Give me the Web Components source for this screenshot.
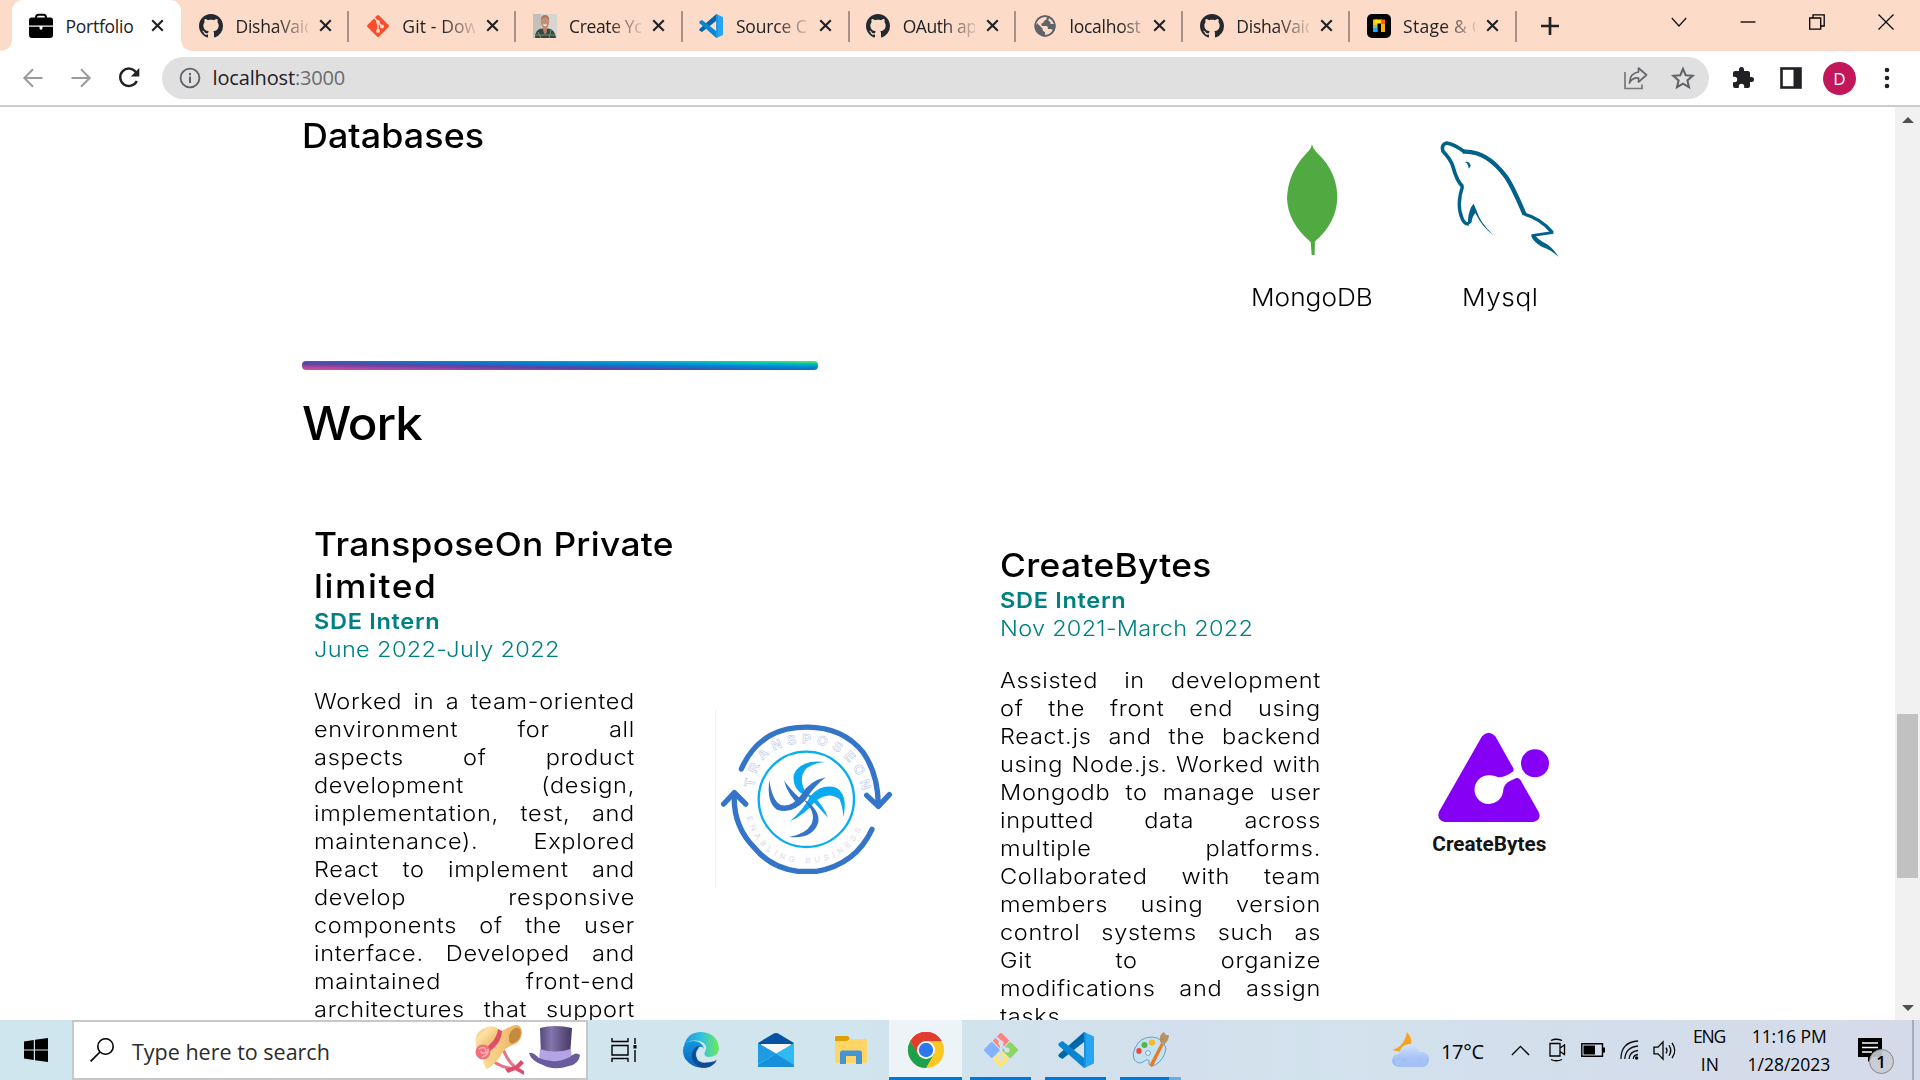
<!DOCTYPE html>
<html lang="en">
<head>
<meta charset="utf-8">
<title>Portfolio</title>
<style>
html,body{margin:0;height:100%;overflow:hidden;background:#fff}
body{font-family:"Open Sans","Noto Sans",sans-serif;color:#202124}
</style>
</head>
<body>
<desktop-screen></desktop-screen>
<script>
const ICONS = {
  briefcase: ['0 0 24 24', '<path d="M7 6V3.500Q7 .7 9.500 .7H14.500Q17 .7 17 3.500V6" fill="none" stroke="#000" stroke-width="2"/><path d="M2.500 3.500H21.500Q24 3.500 24 6.500V11.500H0V6.500Q0 3.500 2.500 3.500Z"/><path d="M0 12.800H10.500V14.500Q12 17 13.500 14.500V12.800H24V21Q24 24 21 24H3Q0 24 0 21Z"/>'],
  github: ['0 0 16 16', '<path fill="#24292f" d="M8 0C3.580 0 0 3.580 0 8c0 3.540 2.290 6.530 5.470 7.590.4.070.55-.17.55-.38 0-.19-.01-.82-.01-1.490-2.010.37-2.530-.49-2.690-.94-.09-.23-.48-.94-.82-1.130-.28-.15-.68-.52-.01-.53.63-.01 1.080.58 1.230.82.72 1.210 1.870.87 2.330.66.07-.52.28-.87.51-1.070-1.780-.2-3.640-.89-3.640-3.950 0-.87.31-1.590.82-2.150-.08-.2-.36-1.020.08-2.120 0 0 .67-.21 2.200.82.64-.18 1.320-.27 2-.27s1.360.09 2 .27c1.530-1.040 2.200-.82 2.200-.82.44 1.100.16 1.920.08 2.120.51.56.82 1.270.82 2.150 0 3.070-1.870 3.750-3.650 3.950.29.25.54.73.54 1.480 0 1.070-.01 1.930-.01 2.200 0 .21.15.46.55.38A8.010 8.010 0 0 0 16 8c0-4.420-3.580-8-8-8Z"/>'],
  git: ['0 0 24 24', '<rect x="3.800" y="3.800" width="16.400" height="16.400" rx="1.500" fill="#fc4c2b" transform="rotate(45 12 12)"/><path d="M8 3.500L12 7.500V17M12 8.500L16 12.500" stroke="#fddbc9" stroke-width="1.500" fill="none"/><g fill="#fddbc9"><circle cx="12" cy="8" r="1.900"/><circle cx="12" cy="17" r="1.900"/><circle cx="16" cy="12.500" r="1.900"/></g>'],
  photo: ['0 0 24 24', '<rect width="24" height="24" fill="#d8d4d0"/><rect width="8" height="24" fill="#c5bfba"/><path d="M2 24Q2 15 9 14.500H15Q22 15 23 24Z" fill="#33483f"/><path d="M5 18L8 24M18 16L16 24M3 21H22" stroke="#7a8f85" stroke-width="1"/><path d="M9.500 12H14.500L13.500 19L12 20.500L10.500 18Z" fill="#b9826b"/><ellipse cx="12" cy="8" rx="4.200" ry="6.200" fill="#c08d76"/><path d="M7.800 6Q8 1 12 1T16.200 6Q14 3.200 12 3.200T7.800 6" fill="#a87863"/><path d="M9.800 10.500Q12 13.500 14.200 10.500" fill="#fff"/>'],
  vscode: ['0 0 36 36', '<path d="M26 0L36 4.500V31.500L26 36Z" fill="#27a4f2"/><path d="M26 0V10L4.500 27L1 25Q-.5 23.500 1 22Z" fill="#0067ad"/><path d="M26 36V26L4.500 9L1 11Q-.5 12.500 1 14Z" fill="#0a86d1"/><path d="M26 0L28 1V35L26 36Z" fill="#1b90dc"/>'],
  globe: ['0 0 24 24', '<circle cx="12" cy="12" r="10.500" fill="#5f6368"/><path d="M14 2.500Q14 6 11 7Q11 9 8.500 9.500V12H14Q15 13 15 15H17.500Q19.500 15 20.500 17Q17 22 12 21V18Q9.500 17.500 9.500 14.500L4 9Q2 13 3.500 15.500Q5 20 10 21.200V23Q1 21 1.200 12Q3 2 14 2.500ZM16 4Q14.500 7.500 17.500 8V10H21.500Q20 5.500 16 4" fill="#fddbc9"/><circle cx="12" cy="12" r="9.800" fill="none" stroke="#5f6368" stroke-width="1.700"/>'],
  stage: ['0 0 24 24', '<rect width="24" height="24" rx="5" fill="#000"/><path d="M6 5.500H10.500V18H6Z" fill="#ffc400"/><path d="M6 11H10V14H6Z" fill="#59d6b0"/><path d="M6 14H10V18H6Z" fill="#28a7ee"/><path d="M8 5.500H15V9.500H8Z" fill="#ffe000"/><path d="M14 5.500H18V11H14Z" fill="#ff5a1f"/><path d="M14 10H18V18H14Z" fill="#ffb000"/>'],
  close: ['0 0 14 14', '<path d="M1.300 1.300L12.700 12.700M12.700 1.300L1.300 12.700" stroke="#202124" stroke-width="2.300"/>'],
  plus: ['0 0 18 18', '<path d="M9 0V18M0 9H18" stroke="#202124" stroke-width="2.700"/>'],
  wchev: ['0 0 16 16', '<path d="M.8 4L8 12L15.200 4" fill="none" stroke="#111" stroke-width="1.200"/>'],
  wmin: ['0 0 16 16', '<path d="M.5 8H15.500" stroke="#000" stroke-width="1.300"/>'],
  wmax: ['0 0 16 16', '<path d="M.7 4H11.700V15.200H.7ZM4 4V.8H15.200V12H12" fill="none" stroke="#000" stroke-width="1.300"/>'],
  wclose: ['0 0 16 16', '<path d="M.5 .5L15.500 15.500M15.500 .5L.5 15.500" stroke="#000" stroke-width="1.200"/>'],
  back: ['0 0 20 20', '<path d="M19.500 10H1.500M10 1.200L1.300 10L10 18.800" fill="none" stroke="#9a9b9d" stroke-width="2"/>'],
  fwd: ['0 0 20 20', '<path d="M.5 10H18.500M10 1.200L18.700 10L10 18.800" fill="none" stroke="#9a9b9d" stroke-width="2"/>'],
  reload: ['0 0 22 22', '<path d="M18.800 14A8.700 8.700 0 1 1 18 5.200" fill="none" stroke="#202124" stroke-width="2.400"/><path d="M21.300 1V9.500H12.800Z" fill="#202124"/>'],
  info: ['0 0 22 22', '<circle cx="11" cy="11" r="9.400" fill="none" stroke="#5f6368" stroke-width="1.900"/><path d="M11 9.600V16M11 6V8.200" stroke="#5f6368" stroke-width="2"/>'],
  share: ['0 0 24 24', '<path d="M1 6V22.500H18V18.500" fill="none" stroke="#76777a" stroke-width="1.700"/><path d="M14.500 2L22.500 9L14.500 16V12Q8 11.500 5.500 17Q6 7 14.500 6Z" fill="none" stroke="#66676a" stroke-width="1.700" stroke-linejoin="round"/>'],
  star: ['0 0 24 24', '<path d="M12 2.800L14.700 9.200L21.700 9.800L16.400 14.400L18 21.200L12 17.600L6 21.200L7.600 14.400L2.300 9.800L9.300 9.200Z" fill="none" stroke="#5f6368" stroke-width="2"/>'],
  puzzle: ['0 0 24 24', '<path fill="#202124" d="M20.500 11H19V7c0-1.100-.9-2-2-2h-4V3.500a2.500 2.500 0 0 0-5 0V5H4c-1.100 0-2 .9-2 2v3.800h1.500a2.700 2.700 0 0 1 0 5.400H2V20c0 1.100.9 2 2 2h3.800v-1.500a2.700 2.700 0 0 1 5.400 0V22H17c1.100 0 2-.9 2-2v-4h1.500a2.500 2.500 0 0 0 0-5Z"/>'],
  panel: ['0 0 22 22', '<rect x="1.500" y="1.500" width="19" height="19" fill="none" stroke="#202124" stroke-width="2.600"/><path d="M13.500 1H21V21H13.500Z" fill="#202124"/>'],
  dots: ['0 0 6 22', '<g fill="#202124"><circle cx="3" cy="3" r="2.300"/><circle cx="3" cy="11" r="2.300"/><circle cx="3" cy="19" r="2.300"/></g>'],
  mongo: ['112 84 360 360', '<path d="M247 103Q251 119 266 132Q323 188 323 264Q320 340 256 394L255 435H246L243 396Q174 338 172 264Q175 188 229 131Q244 119 247 103Z" fill="#50aa41" transform="translate(45 0)"/>'],
  dolphin: ['630 84 360 360', '<g fill="none" stroke="#00618a" stroke-linejoin="round"><path d="M970 367L905 377" stroke-width="8"/><path d="M882 312Q930 324 967 367" stroke-width="10"/><path d="M698 125Q770 120 829 202Q848 230 884 314" stroke-width="13"/><path d="M704 126Q672 102 650 99Q632 104 639 124Q662 148 669 170Q680 212 698 230" stroke-width="11"/><path d="M698 228Q678 286 697 327Q704 343 716 342" stroke-width="10"/></g><g fill="#00618a"><path d="M731 281L739 300Q752 341 790 375Q756 351 736 309Q726 320 725 337Q717 347 706 344Q716 338 714 329Q717 295 731 281Z"/><path d="M903 377L914 374Q923 388 950 402Q970 415 986 441Q965 420 935 410Q911 396 903 377Z"/><path d="M704 156Q720 152 722 169L716 176Q715 166 711 160Z"/></g>'],
  transpose: ['0 0 660 600', `<path d="M47 28V566" stroke="#eceffd" stroke-width="3"/>
    <g fill="none" stroke="#3474c9" stroke-width="16"><path d="M124 207Q174 94 290 83Q420 70 490 158Q533 220 535 312" stroke-linecap="round"/><path d="M500 286L535 319L568 284" stroke-linecap="round" stroke-linejoin="round"/><path d="M103 282Q98 378 164 444Q212 503 294 514H350Q467 493 516 388" stroke-linecap="round"/><path d="M71 312L103 278L137 312" stroke-linecap="round" stroke-linejoin="round"/></g>
    <circle cx="319" cy="298" r="143" fill="none" stroke="#06aef2" stroke-width="7"/>
    <g fill="#0baaf0"><path d="M375 186Q300 178 281 224Q277 260 303 280L320 283Q295 240 313 213Q330 190 375 186Z"/><path d="M270 364Q315 343 345 305Q385 272 418 297Q428 318 430 351Q445 285 409 263Q365 250 331 288Q310 330 270 364Z"/><path d="M314 280L329 293L384 353Q370 316 340 289Z"/></g>
    <g fill="#3474c9"><path d="M208 240Q199 308 231 329Q274 345 317 299Q341 260 377 232Q329 243 306 281Q277 323 242 315Q216 301 208 240Z"/><path d="M309 298Q351 338 334 373Q318 402 268 411Q340 418 355 366Q360 332 318 302Z"/><path d="M252 242Q265 288 298 314L312 304Q285 285 252 242Z"/></g>
    <defs><path id="arcTop" d="M161 262Q172 132 319 130Q455 134 490 280"/><path id="arcBottom" d="M140 352Q180 487 319 489Q458 487 496 352"/></defs>
    <text font-family="Liberation Sans" font-weight="700" font-size="40" fill="#fff" stroke="#b0c2e5" stroke-width="1.500"><textPath href="#arcTop" textLength="470">TRANSPOSEON</textPath></text>
    <text font-family="Liberation Sans" font-size="23" fill="#fff" stroke="#ccd" stroke-width=".8"><textPath href="#arcBottom" textLength="450">ENABLING BUSINESS</textPath></text>`],
  createbytes: ['0 0 540 510', `<path d="M246 109Q266 87 286 109L340 205Q343 213 336 217Q315 232 295 232Q280 225 266 226A43 43 0 1 0 309 276Q309 252 331 242L349 234Q357 233 361 239L416 336Q426 360 400 366H134Q109 360 117 335Z" fill="#8500f5"/><circle cx="405" cy="190" r="42" fill="#8500f5"/><text x="97" y="454" font-family="Roboto" font-weight="700" font-size="58" fill="#151515" textLength="342" lengthAdjust="spacingAndGlyphs">CreateBytes</text>`],
  windows: ['0 0 24 24', '<path d="M0 3.400L9.800 2V11.400H0ZM11 1.800L24 0V11.400H11ZM0 12.600H9.800V22L0 20.600ZM11 12.600H24V24L11 22.200Z"/>'],
  search: ['0 0 24 24', '<circle cx="15.500" cy="8.500" r="7.700" fill="none" stroke="#000" stroke-width="1.600"/><path d="M10 14L.6 23.400" stroke="#000" stroke-width="1.700"/>'],
  hats: ['0 0 106 50', `<defs><linearGradient id="straw" x2="1" y2="1"><stop stop-color="#e9b765"/><stop offset=".3" stop-color="#ffe2a2"/><stop offset="1" stop-color="#e0a04c"/></linearGradient><linearGradient id="brim" x2="1"><stop stop-color="#ffdf9d"/><stop offset="1" stop-color="#e9ad58"/></linearGradient><linearGradient id="felt"><stop stop-color="#55497d"/><stop offset=".35" stop-color="#8276ad"/><stop offset="1" stop-color="#453862"/></linearGradient></defs>
    <path d="M13 30Q20 42 40 44M28 24Q33 37 41 43" fill="none" stroke="#e87488" stroke-width="3"/>
    <path d="M24 7C30 5 36 0 42 0C49 2 48 13 42 18C36 21 31 22 28 27C24 34 18 41 12 44C8 41 9 34 6 30Z" fill="url(#brim)"/>
    <path d="M34 15C33 8 38 2 43 3C48 5 46 15 39 18C36 19 34 18 34 15Z" fill="#c58a40"/>
    <path d="M1 21C-1 12 3 5 10 3C15 0 22 1 25 6C26 10 22 18 14 24C8 28 3 28 1 21Z" fill="url(#straw)"/>
    <path d="M9 24C17 19 22 12 23 4L27 6C27 14 21 23 12 28Z" fill="#df5068"/>
    <circle cx="8" cy="27" r="7.500" fill="#f16f7b"/><path d="M4 24Q11 20 11 27Q6 30 6 26M7 32Q14 30 13 24" fill="none" stroke="#ffadb1" stroke-width="1.500"/><path d="M40 41L46 35L49 38L44 43L49 46V50L40 45L33 48L30 44Z" fill="#df4d6a"/>
    <path d="M65 3Q80 -1 97 3L95 31H66Z" fill="url(#felt)"/><path d="M65 24Q80 29 96 24L97 35Q80 41 64 35Z" fill="#b4a3e5"/><path d="M54 28Q58 27 64 33Q80 40 95 32Q101 26 105 30Q104 39 94 41Q79 46 68 40Q56 36 54 28Z" fill="#6a5b9d"/>`],
  taskview: ['0 0 26 24', '<path d="M1 0V3.500H17V0M1 24V20.500H17V24M1 7.500H17V17H1ZM24 0V6M24 12V24" fill="none" stroke="#000" stroke-width="1.400"/><rect x="22.500" y="7" width="3" height="3.500"/>'],
  edge: ['0 0 36 36', `<defs><linearGradient id="eg"><stop stop-color="#2293dc"/><stop offset=".5" stop-color="#31c3dd"/><stop offset="1" stop-color="#6dea5a"/></linearGradient><linearGradient id="eb" x2="0" y2="1"><stop stop-color="#1496de"/><stop offset="1" stop-color="#0763bd"/></linearGradient></defs><path d="M1 14Q4 0 18 0Q35 1 36 17Q35 25 25 25Q20 24 22 20Q26 12 16 9Q6 7 1 14Z" fill="url(#eg)"/><path d="M0 19Q0 9 10 9Q19 9 21 17Q13 15 13 23Q14 34 25 34.500Q15 38 6 31Q0 26 0 19Z" fill="url(#eb)"/><path d="M17 14Q10 20 14 27Q19 34 32 28Q35 27 32 31Q24 39 15 34Q5 26 11 17Q13 14 17 14Z" fill="#114b94"/><path d="M16 15Q21 14 21 18Q18 22 21 25Q24 28 32 26Q35 26 32 29Q23 32 18 28Q12 22 16 15Z" fill="#d4e6ef"/>`],
  mail: ['0 0 36 34', '<path d="M0 10L15 1Q18-1 21 1L36 10V20H0Z" fill="#0753a1"/><path d="M3 11H33V25H3Z" fill="#f8f8f8"/><path d="M0 10L36 31V33H0Z" fill="#1e9be2"/><path d="M36 10L0 31V34H36Z" fill="#30baf1"/><path d="M18 21L36 32V34H0V32Z" fill="#188fda"/>'],
  folder: ['0 0 32 28', '<path d="M0 5V1.500Q0 0 1.500 0H12Q14 0 14.500 3H30Q32 3 32 5V25Q32 27 30 27H2Q0 27 0 25Z" fill="#ffd566"/><path d="M0 5V1.500Q0 0 1.500 0H12Q14 0 14.500 3L12 5Z" fill="#dda000"/><path d="M5 28V17Q5 14.500 7.500 14.500H24.500Q27 14.500 27 17V28H21V20H11V28Z" fill="#4395d5"/>'],
  chrome: ['0 0 36 36', '<circle cx="18" cy="18" r="18" fill="#fcc71f"/><path d="M18 18L2.400 9A18 18 0 0 1 33.600 9H18Z" fill="#e33b2e"/><path d="M2.400 9A18 18 0 0 0 18 36L26 22L18 18L10.500 22.500Z" fill="#1da04a"/><path d="M2.400 9L10.200 22.500L18 9H33.600A18 18 0 0 0 2.400 9" fill="#e33b2e"/><circle cx="18" cy="18" r="9" fill="#fff"/><circle cx="18" cy="18" r="7.200" fill="#2a78ec"/>'],
  gitbash: ['0 0 36 36', '<g transform="rotate(45 18 18)"><rect x="5.500" y="5.500" width="12" height="12" rx="1.500" fill="#ff8282"/><rect x="18.500" y="5.500" width="12" height="12" rx="1.500" fill="#8bd565"/><rect x="5.500" y="18.500" width="12" height="12" rx="1.500" fill="#83b2ff"/><rect x="18.500" y="18.500" width="12" height="12" rx="1.500" fill="#ffe477"/></g><path d="M13 5L18 10V29M18 13L24 18" fill="none" stroke="#d4e2eb" stroke-width="2"/><g fill="#d4e2eb"><circle cx="18" cy="11" r="2.600"/><circle cx="18" cy="26" r="2.600"/><circle cx="24" cy="18" r="2.600"/></g>'],
  paint: ['0 0 36 36', '<path d="M2 16Q7 5 19 5Q31 6 33 17Q31 28 22 33Q15 36 16 29Q15 26 10 30Q5 33 1 27Q-1 22 2 16Z" fill="#c3e2f2" stroke="#6d9cb9" stroke-width="1"/><circle cx="15" cy="21" r="2.400" fill="#eaf5fa" stroke="#78a3bb"/><ellipse cx="6" cy="19" rx="2.700" ry="3" fill="#e8493d"/><ellipse cx="11.500" cy="13" rx="3" ry="2.900" fill="#54b848"/><ellipse cx="19" cy="10.500" rx="3.200" ry="2.900" fill="#f6b829"/><path d="M28 11L31 12L20 34Q17 36 17 32Z" fill="#e97922"/><path d="M27 10Q26 2 31 0L33 3L36 3Q35 11 31 12Z" fill="#b99263"/>'],
  weather: ['0 0 37 36', '<defs><linearGradient id="cl" x2="0" y2="1"><stop stop-color="#d5e4fd"/><stop offset="1" stop-color="#88aef0"/></linearGradient></defs><path d="M15 0Q22 8 18 15Q12 22 0 18Q12 15 15 0Z" fill="#f6a323"/><path d="M7 35Q0 34 0 28Q1 22 7 22Q9 12 18 12Q26 13 27 20Q37 19 37 28Q36 35 30 35H7Z" fill="url(#cl)"/><path d="M2 31Q5 25 12 30Q19 22 27 29Q33 23 36 31Q34 35 30 35H7Q3 35 2 31" fill="#a9c6f5" opacity=".7"/>'],
  up: ['0 0 20 12', '<path d="M1 11L10 1.500L19 11" fill="none" stroke="#000" stroke-width="1.500"/>'],
  meet: ['0 0 17 24', '<path d="M1 5.500H11V18H1ZM11 10L15.500 7V16.500L11 13.500M2 2.500Q7 0 13 2.500M2 21.500Q7 24 13 21.500" fill="none" stroke="#000" stroke-width="1.300"/>'],
  battery: ['0 0 24 14', '<path d="M.8 .8H21.500V13.200H.8Z" fill="none" stroke="#000" stroke-width="1.400"/><path d="M2.500 2.500H14V11.500H2.500ZM22 4.500H24V9.500H22Z"/>'],
  wifi: ['0 0 20 20', '<g fill="none" stroke="#111" stroke-width="1.300"><path d="M1 19Q1 2 19 1M5 19Q6 7 19 6M9.500 19Q10 11.500 19 10.500" /><path d="M14 19Q14 15 19 14.500"/></g><circle cx="17.500" cy="18" r="1.700"/>'],
  speaker: ['0 0 23 22', '<path d="M1 7.500H5L10 2V20L5 14.500H1Z" fill="none" stroke="#000" stroke-width="1.300"/><path d="M13 8Q15 11 13 14M16 5.500Q19.500 11 16 16.500M19 3Q24.500 11 19 19" fill="none" stroke="#000" stroke-width="1.300"/>'],
  note: ['0 0 24 24', '<path d="M0 0H24V19H15L10 24V19H0Z"/><path d="M4 5H20M4 9.500H20M4 14H14" stroke="#fff" stroke-width="1.400"/>'],
  arrowUp: ['0 0 12 8', '<path d="M0 7L6 1L12 7Z" fill="#505050"/>'],
  arrowDown: ['0 0 12 8', '<path d="M0 1L6 7L12 1Z" fill="#505050"/>']
};

function define(name, markup) {
  const t = document.createElement('template');
  t.innerHTML = markup;
  customElements.define(name, class extends HTMLElement {
    constructor() { super(); this.attachShadow({mode: 'open'}).append(t.content.cloneNode(true)); }
  });
}

customElements.define('ui-icon', class extends HTMLElement {
  connectedCallback() {
    if (this.shadowRoot) return;
    const [box, art] = ICONS[this.getAttribute('name')];
    const w = this.getAttribute('w') || 24, h = this.getAttribute('h') || w;
    this.attachShadow({mode: 'open'}).innerHTML =
      `<style>:host{display:block;flex:none;width:${w}px;height:${h}px}svg{display:block;overflow:visible}</style>
       <svg width="${w}" height="${h}" viewBox="${box}" preserveAspectRatio="none" aria-hidden="true">${art}</svg>`;
  }
});

/* A single line of text whose tracking is set so that it fills the width in its "w" attribute.
   The inherited --stretch widens the glyphs themselves. */
const fitted = [];
customElements.define('fit-text', class extends HTMLElement {
  connectedCallback() {
    if (this.shadowRoot) return;
    this.attachShadow({mode: 'open'}).innerHTML =
      '<style>:host{display:inline-block;white-space:nowrap;flex:none}span{display:inline-block;transform:scaleX(var(--stretch,1));transform-origin:0 50%}</style><span><slot></slot></span>';
    fitted.push(this);
  }
  fit() {
    const inner = this.shadowRoot.querySelector('span');
    const gaps = this.textContent.length - 1, w = +this.getAttribute('w');
    const s = +getComputedStyle(this).getPropertyValue('--stretch') || 1;
    inner.style.letterSpacing = (w / s - inner.offsetWidth) / gaps + 'px';
    this.style.width = w + 'px';
  }
});

define('browser-tab', `<style>
  :host{display:flex;align-items:center;box-sizing:border-box;width:166.800px;height:51px;padding:0 15.500px 0 16.500px;position:relative;font-size:17.500px;line-height:50px;flex:none}
  :host([active]){width:169px;padding:0 17px;margin-right:1.500px;background:#fff;border-radius:11px 11px 0 0}
  :host([active])::before,:host([active])::after{content:"";position:absolute;bottom:0;width:11px;height:11px}
  :host([active])::before{left:-11px;background:radial-gradient(circle at 0 0,transparent 10.500px,#fff 11px)}
  :host([active])::after{right:-11px;background:radial-gradient(circle at 100% 0,transparent 10.500px,#fff 11px)}
  .t{flex:1;min-width:0;margin:0 11px 0 12.500px;overflow:hidden;-webkit-mask-image:linear-gradient(90deg,#000 55%,#0002 100%)}
  :host([full]) .t{-webkit-mask-image:linear-gradient(90deg,#000 70%,#0004 100%)}
  :host([active]) .t{-webkit-mask-image:none;margin:0 10px 0 12.500px}
  :host([bar]){border-right:2px solid #a99188;border-image:linear-gradient(transparent 12px,#a99188 12px,#a99188 41px,transparent 41px) 1}
  </style><slot name="icon"></slot><div class="t"><slot></slot></div><ui-icon name="close" w="13"></ui-icon>`);

define('tab-strip', `<style>
  :host{display:flex;align-items:center;height:51px;background:#fddbc9;padding-left:12px}
  .plus{margin-left:24px}.win{display:flex;margin-left:auto}.win ui-icon{margin-right:53px;position:relative;top:-4px}.win ui-icon:last-child{margin-right:26px}
  </style><slot></slot><ui-icon class="plus" name="plus" w="18"></ui-icon>
  <div class="win"><ui-icon name="wchev" w="16"></ui-icon><ui-icon name="wmin" w="16"></ui-icon><ui-icon name="wmax" w="16"></ui-icon><ui-icon name="wclose" w="16"></ui-icon></div>`);

define('browser-toolbar', `<style>
  :host{display:flex;align-items:center;box-sizing:border-box;height:56px;padding:0 30px 0 23px;border-bottom:2px solid #ccc;background:#fff}
  .box{display:flex;align-items:center;height:42px;width:1547.500px;box-sizing:border-box;margin-left:22px;border-radius:21px;background:#e0e0e0;padding:0 14px 0 16.500px}
  .url{margin-left:12px;font-size:20px;line-height:40px}.url span{color:#6c6d70}
  .av{width:33px;height:33px;border-radius:50%;background:#c2185b;color:#fff;font-size:17px;line-height:33px;text-align:center;margin-left:21px}
  </style><ui-icon name="back" w="20"></ui-icon><ui-icon name="fwd" w="20" style="margin-left:28px"></ui-icon><ui-icon name="reload" w="22" style="margin-left:27px"></ui-icon>
  <div class="box"><ui-icon name="info" w="22"></ui-icon><div class="url"><fit-text w="133">localhost<span>:3000</span></fit-text></div>
  <ui-icon name="share" w="24" style="margin-left:auto"></ui-icon><ui-icon name="star" w="24" style="margin-left:23px"></ui-icon></div>
  <ui-icon name="puzzle" w="24" style="margin-left:22px"></ui-icon><ui-icon name="panel" w="22" style="margin-left:25px"></ui-icon><div class="av">D</div><ui-icon name="dots" w="6" h="22" style="margin-left:28px"></ui-icon>`);

define('skill-badge', `<style>
  :host{display:flex;flex-direction:column;align-items:center;width:188px;font-size:24.500px;line-height:30px;color:#000;font-weight:350}
  div{margin-top:24px}</style><slot name="icon"></slot><div><slot></slot></div>`);

define('job-card', `<style>
  :host{display:flex;color:#000;font-size:22px;line-height:28px;font-weight:350}
  .text{width:385.500px;flex:none}
  ::slotted(h3){margin:0;font-weight:500;font-size:33px;line-height:42px}
  .role{font-weight:570;color:teal}.date{color:teal}
  .about{margin-top:24px;width:calc(321px / var(--stretch));transform:scaleX(var(--stretch));transform-origin:0 0}
  .about ::slotted(p){margin:0;text-align:justify;text-align-last:justify;letter-spacing:.650px;white-space:nowrap}
  .about ::slotted(p:last-of-type){text-align-last:left}
  </style><div class="text"><slot name="name"></slot><div class="role"><slot name="role"></slot></div><div class="date"><slot name="date"></slot></div><div class="about"><slot></slot></div></div><slot name="logo"></slot>`);

define('scroll-bar', `<style>
  :host{display:flex;flex-direction:column;align-items:center;width:25px;background:#f1f1f1;flex:none;box-sizing:border-box;padding:9px 0 8px}
  .thumb{width:21px;height:164px;background:#c1c1c1;margin-top:590px;margin-bottom:auto}
  </style><ui-icon name="arrowUp" w="12" h="8"></ui-icon><div class="thumb"></div><ui-icon name="arrowDown" w="12" h="8"></ui-icon>`);

define('portfolio-page', `<style>
  :host{display:block;flex:1;min-width:0;height:913px;overflow:hidden;box-sizing:border-box;padding:8px 0 0 302px;background:#fff;font-family:Inter,"Liberation Sans",sans-serif;color:#000;--stretch:1.070}
  .db{display:flex;height:246px}
  h2,h1{margin:0;font-weight:500}h2{font-size:33.500px;line-height:42px;width:916px}
  skill-badge{padding-top:23px}
  .rule{height:9px;width:516px;border-radius:4px;background:linear-gradient(to right top,#d64fa0 0%,#b84a9f 12%,#6040a0 36%,#4055b5 45%,#1272ca 54%,#0085cf 64%,#00a5d8 76%,#00cf9a 86%,#60dc60 95%)}
  h1{font-size:46px;line-height:56px;margin-top:25px}
  .jobs{display:flex;align-items:flex-start;margin:72px 0 0 12px}
  .b{margin-left:80.500px;padding-top:21px}
  </style>
  <section class="db"><h2><fit-text w="182.500">Databases</fit-text></h2>
    <skill-badge><ui-icon slot="icon" name="mongo" w="120"></ui-icon><fit-text w="122">MongoDB</fit-text></skill-badge>
    <skill-badge><ui-icon slot="icon" name="dolphin" w="120"></ui-icon><fit-text w="76">Mysql</fit-text></skill-badge></section>
  <div class="rule"></div>
  <h1><fit-text w="121">Work</fit-text></h1>
  <section class="jobs">
    <job-card><h3 slot="name"><fit-text w="360">TransposeOn Private</fit-text><br><fit-text w="122">limited</fit-text></h3>
      <fit-text slot="role" w="126">SDE Intern</fit-text><fit-text slot="date" w="246">June 2022-July 2022</fit-text>
      <p>Worked in a team-oriented</p><p>environment for all</p><p>aspects of product</p><p>development (design,</p><p>implementation, test, and</p><p>maintenance). Explored</p><p>React to implement and</p><p>develop responsive</p><p>components of the user</p><p>interface. Developed and</p><p>maintained front-end</p><p style="text-align-last:justify">architectures that support</p>
      <ui-icon slot="logo" name="transpose" w="220" h="200" style="margin-top:177px"></ui-icon></job-card>
    <job-card class="b"><h3 slot="name"><fit-text w="211">CreateBytes</fit-text></h3>
      <fit-text slot="role" w="126">SDE Intern</fit-text><fit-text slot="date" w="253">Nov 2021-March 2022</fit-text>
      <p>Assisted in development</p><p>of the front end using</p><p>React.js and the backend</p><p>using Node.js. Worked with</p><p>Mongodb to manage user</p><p>inputted data across</p><p>multiple platforms.</p><p>Collaborated with team</p><p>members using version</p><p>control systems such as</p><p>Git to organize</p><p>modifications and assign</p><p>tasks.</p>
      <ui-icon slot="logo" name="createbytes" w="180" h="170" style="margin:156px 0 0 14px"></ui-icon></job-card>
  </section>`);

define('task-button', `<style>
  :host{display:flex;width:75px;height:60px;align-items:center;justify-content:center;position:relative;flex:none}
  :host([open])::after,:host([active])::after{content:"";position:absolute;bottom:0;left:7px;right:7px;height:3px;background:#0078d7}
  :host([active])::before{content:"";position:absolute;inset:0 1px;background:#edf4f8}
  :host([active])::after{left:1px;right:1px}
  :host([multi])::after{background:linear-gradient(90deg,#0078d7 49px,#66aee8 49px)}
  ::slotted(*){position:relative}
  </style><slot></slot>`);

define('task-bar', `<style>
  :host{display:flex;align-items:center;height:60px;background:linear-gradient(90deg,#cfe6ee 0%,#d1e5ee 45%,#d3dfec 62%,#d2e2ed 68%,#d3dfec 78%,#d5dae9 100%);color:#000;font-size:17.500px}
  .search{display:flex;align-items:center;box-sizing:border-box;width:516px;height:60px;border:2px solid #c8c8c8;background:#fff;padding:0 5px 0 16px;margin-left:24px}
  .q{font-size:21.500px;line-height:54px;margin-left:18px;padding-top:3px;color:#2b2b2b}
  .two{display:flex;flex-direction:column;align-items:center;line-height:28px;padding-bottom:1px}
  .n{position:relative;margin-left:27px}
  .n b{position:absolute;left:11px;top:11px;width:23px;height:23px;border:1px solid #888;border-radius:50%;background:#c9cbd3e8;text-align:center;font:600 17px/23px "Open Sans"}
  .end{width:2px;height:60px;background:#a4adbd;margin-left:30px}
  </style>
  <ui-icon name="windows" w="24" style="margin-left:24px"></ui-icon>
  <div class="search"><ui-icon name="search" w="24"></ui-icon><div class="q"><fit-text w="198">Type here to search</fit-text></div><ui-icon name="hats" w="106" h="50" style="margin-left:auto"></ui-icon></div>
  <ui-icon name="taskview" w="26" h="24" style="margin:0 26px 0 23px"></ui-icon>
  <task-button><ui-icon name="edge" w="36"></ui-icon></task-button><task-button><ui-icon name="mail" w="36" h="34"></ui-icon></task-button><task-button><ui-icon name="folder" w="32" h="28"></ui-icon></task-button>
  <task-button active><ui-icon name="chrome" w="36"></ui-icon></task-button><task-button open><ui-icon name="gitbash" w="36"></ui-icon></task-button><task-button open><ui-icon name="vscode" w="36"></ui-icon></task-button><task-button open multi><ui-icon name="paint" w="36"></ui-icon></task-button>
  <ui-icon name="weather" w="37" h="36" style="margin-left:204px"></ui-icon><fit-text w="43" style="font-size:20px;margin-left:12px;line-height:58px;padding-top:4px">17°C</fit-text>
  <ui-icon name="up" w="19" h="11" style="margin-left:27px"></ui-icon><ui-icon name="meet" w="17" h="24" style="margin-left:19px"></ui-icon><ui-icon name="battery" w="24" h="14" style="margin-left:15px"></ui-icon><ui-icon name="wifi" w="19" h="20" style="margin-left:15px"></ui-icon><ui-icon name="speaker" w="23" h="21" style="margin-left:14px"></ui-icon>
  <div class="two" style="margin-left:17px"><fit-text w="33.500">ENG</fit-text><fit-text w="18">IN</fit-text></div>
  <div class="two" style="margin-left:21px"><fit-text w="74.500">11:16 PM</fit-text><fit-text w="83">1/28/2023</fit-text></div>
  <div class="n"><ui-icon name="note" w="24"></ui-icon><b>1</b></div><div class="end"></div>`);

define('desktop-screen', `<style>
  :host{display:flex;flex-direction:column;width:1920px;height:1080px;overflow:hidden}
  .view{display:flex;height:913px}
  </style>
  <tab-strip>
    <browser-tab active><ui-icon slot="icon" name="briefcase"></ui-icon><fit-text w="68">Portfolio</fit-text></browser-tab>
    <browser-tab bar><ui-icon slot="icon" name="github"></ui-icon><fit-text w="79">DishaVaid</fit-text></browser-tab>
    <browser-tab bar><ui-icon slot="icon" name="git"></ui-icon><fit-text w="76">Git - Dow</fit-text></browser-tab>
    <browser-tab bar><ui-icon slot="icon" name="photo"></ui-icon><fit-text w="76">Create Yo</fit-text></browser-tab>
    <browser-tab bar><ui-icon slot="icon" name="vscode"></ui-icon><fit-text w="71">Source C</fit-text></browser-tab>
    <browser-tab bar><ui-icon slot="icon" name="github"></ui-icon><fit-text w="74">OAuth ap</fit-text></browser-tab>
    <browser-tab bar full><ui-icon slot="icon" name="globe"></ui-icon><fit-text w="71">localhost</fit-text></browser-tab>
    <browser-tab bar><ui-icon slot="icon" name="github"></ui-icon><fit-text w="79">DishaVaid</fit-text></browser-tab>
    <browser-tab bar><ui-icon slot="icon" name="stage"></ui-icon><fit-text w="80">Stage &amp; C</fit-text></browser-tab>
  </tab-strip>
  <browser-toolbar></browser-toolbar>
  <div class="view"><portfolio-page></portfolio-page><scroll-bar></scroll-bar></div>
  <task-bar></task-bar>`);

fitted.forEach(f => f.fit());
</script>
</body>
</html>
